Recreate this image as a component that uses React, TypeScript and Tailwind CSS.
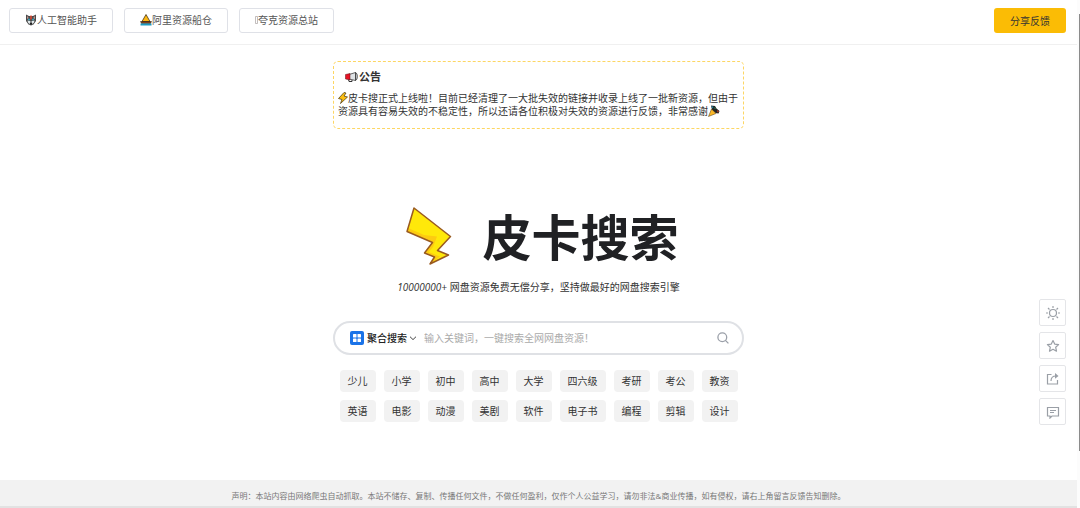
import React from "react";

type NavLink = {
  label: string;
  icon: React.ReactNode;
};

type IconProps = {
  className?: string;
};

function WolfIcon() {
  return (
    <svg viewBox="0 0 24 24" className="h-3 w-3" aria-hidden="true">
      <path d="M2 1l6 3h8l6-3v13l-5 7-5 2-5-2-5-7z" fill="#4b4b4b" />
      <path d="M4 4l3 3-2 4zM20 4l-3 3 2 4z" fill="#e8a9a0" />
      <path d="M5 13l6 1-1 7-4-4zM19 13l-6 1 1 7 4-4z" fill="#e3e9eb" />
      <path d="M6 9l4 1-1 3-3-1zM18 9l-4 1 1 3 3-1z" fill="#35a9c4" />
      <path d="M10.500 3h3v8h-3z" fill="#e2472f" />
      <path d="M9 18h6l-3 4z" fill="#1f1f1f" />
    </svg>
  );
}

function BoatIcon() {
  return (
    <svg viewBox="0 0 24 24" className="h-3 w-3" aria-hidden="true">
      <path d="M12 1l8 14H4z" fill="#fdb813" stroke="#3a2a10" strokeWidth="1.500" />
      <path d="M1 15h22l-2 4H3z" fill="#7b3f1d" stroke="#2b1a0d" />
      <path d="M1 19h22v4H1z" fill="#1c9ac0" />
    </svg>
  );
}

function TofuIcon() {
  return (
    <svg viewBox="0 0 3 8" className="h-2 w-[3px]" aria-hidden="true">
      <path d="M.5 .5h2v7h-2z" fill="none" stroke="#a9a2a0" strokeWidth=".7" />
    </svg>
  );
}

function HornIcon() {
  return (
    <svg viewBox="0 0 26 20" className="h-[10px] w-[13px]" aria-hidden="true">
      <path d="M8 5l13-4v16L8 14z" fill="#dfe3e6" stroke="#333" strokeWidth="1.500" />
      <path d="M1 5l9-2v13l-9-2z" fill="#e81224" stroke="#5c1016" />
      <path d="M7 15l1 4h6v-3" fill="none" stroke="#333" strokeWidth="2" />
      <path d="M21 1c5 2 5 14 0 16z" fill="#c4c8cb" stroke="#333" strokeWidth="1.500" />
    </svg>
  );
}

function ZapIcon() {
  return (
    <svg
      viewBox="0 0 20 24"
      className="inline-block h-3 w-[10px] align-[-2px]"
      aria-hidden="true"
    >
      <path
        d="M12 1L1 13l7 2-3 8 14-13-7-2 4-6z"
        fill="#fcbf12"
        stroke="#4a3a12"
        strokeWidth="1.500"
        strokeLinejoin="round"
      />
    </svg>
  );
}

function PartyIcon() {
  return (
    <svg
      viewBox="0 0 24 24"
      className="inline-block h-3 w-3 align-[-2px]"
      aria-hidden="true"
    >
      <path d="M6 1l8 1 3 5 6 5-2 5-6-1-7-6z" fill="#232323" />
      <path d="M7 8l9 9L1 23z" fill="#fcb827" stroke="#4a3512" />
      <path d="M7 2l4 2-2 3z" fill="#1c9ac0" />
      <path d="M18 10l4 3-3 2z" fill="#d13a30" />
      <path d="M13 4l3 3-3 1z" fill="#2f8f5b" />
    </svg>
  );
}

function BoltLogo() {
  return (
    <svg viewBox="0 0 46 58" className="h-[58px] w-[46px]" aria-hidden="true">
      <path
        d="M8 1L44.500 29.500 31.500 43.500 42.500 48 24 57 28.500 50 18.500 46 26.500 35.500 1 24.500z"
        fill="#ffe80a"
      />
      <path
        d="M1 24.500L2 21 18 28 31 29.500 27 40 22.500 45 34 49.500 24 57 28.500 50 18.500 46 26.500 35.500z"
        fill="#fdcb11"
      />
      <path
        d="M8 1L44.500 29.500 31.500 43.500 42.500 48 24 57 28.500 50 18.500 46 26.500 35.500 1 24.500z"
        fill="none"
        stroke="#995a20"
        strokeWidth="1.500"
        strokeLinejoin="round"
      />
    </svg>
  );
}

function GridIcon() {
  return (
    <svg viewBox="0 0 14 14" className="h-[14px] w-[14px]" aria-hidden="true">
      <rect width="14" height="14" rx="2" fill="#1a73e8" />
      <g fill="#fff">
        <rect x="3" y="3" width="3.500" height="3.500" rx=".6" />
        <rect x="7.500" y="3" width="3.500" height="3.500" rx=".6" />
        <rect x="3" y="7.500" width="3.500" height="3.500" rx=".6" />
        <rect x="7.500" y="7.500" width="3.500" height="3.500" rx=".6" />
      </g>
    </svg>
  );
}

function ChevronIcon({ className }: IconProps) {
  return (
    <svg viewBox="0 0 8 8" className={className} aria-hidden="true">
      <path d="M1 2.700l3 2.900 3-2.900" fill="none" stroke="#444" />
    </svg>
  );
}

function SearchIcon() {
  return (
    <svg
      viewBox="0 0 12 12"
      className="h-3 w-3"
      fill="none"
      stroke="#9a9fa8"
      strokeWidth="1.300"
      aria-hidden="true"
    >
      <circle cx="5.300" cy="5.300" r="4.400" />
      <path d="M8.400 8.400l3 3" />
    </svg>
  );
}

function ToolIcon({ children }: { children: React.ReactNode }) {
  return (
    <svg
      viewBox="0 0 14 14"
      className="h-[14px] w-[14px]"
      fill="none"
      stroke="#9a9fa6"
      strokeWidth="1.200"
      aria-hidden="true"
    >
      {children}
    </svg>
  );
}

const navLinks: NavLink[] = [
  { label: "人工智能助手", icon: <WolfIcon /> },
  { label: "阿里资源船仓", icon: <BoatIcon /> },
  { label: "夸克资源总站", icon: <TofuIcon /> },
];

const tagRows = [
  ["少儿", "小学", "初中", "高中", "大学", "四六级", "考研", "考公", "教资"],
  ["英语", "电影", "动漫", "美剧", "软件", "电子书", "编程", "剪辑", "设计"],
];

const tools = [
  {
    label: "切换主题",
    icon: (
      <ToolIcon>
        <circle cx="7" cy="7" r="3.500" />
        <path d="M7 0v2M7 12v2M0 7h2M12 7h2M2 2l1.500 1.500M10.500 10.500L12 12M12 2l-1.500 1.500M3.500 10.500L2 12" />
      </ToolIcon>
    ),
  },
  {
    label: "收藏",
    icon: (
      <ToolIcon>
        <path
          d="M7 1.500l1.700 3.600 3.900.5-2.900 2.700.8 3.900L7 10.300l-3.500 1.900.8-3.900L1.400 5.600l3.900-.5z"
          strokeLinejoin="round"
        />
      </ToolIcon>
    ),
  },
  {
    label: "分享",
    icon: (
      <ToolIcon>
        <path d="M5.500 2.500h-4v9.500h10V8" />
        <path d="M5 9C5 5.500 7 4 10 4" />
        <path d="M9 1l3.500 3L9 6.800z" fill="#9a9fa6" stroke="none" />
      </ToolIcon>
    ),
  },
  {
    label: "留言",
    icon: (
      <ToolIcon>
        <path d="M1.500 2.500h11v8.500H6l-2 2v-2H1.500z" />
        <path d="M4 5.500h6M4 7.500h4" />
      </ToolIcon>
    ),
  },
];

function Header() {
  return (
    <header className="flex h-[45px] items-start justify-between border-b border-[#f0f0f0] pt-2 pr-[11px] pl-[9px]">
      <nav className="flex gap-[11px]">
        {navLinks.map((link) => (
          <a
            key={link.label}
            href="#"
            className="flex h-[25px] items-center rounded-[3px] border border-[#dfe1e7] px-[15px] pb-px text-[#555]"
          >
            {link.icon}
            {link.label}
          </a>
        ))}
      </nav>
      <button
        type="button"
        className="h-[25px] rounded-[3px] bg-[#fbbc05] px-4 text-[#333]"
      >
        分享反馈
      </button>
    </header>
  );
}

function Notice() {
  return (
    <section className="mt-4 h-[68px] w-full rounded-[5px] border border-dashed border-[#fdd663] px-1 pt-[7px] text-[#333]">
      <h2 className="flex items-center gap-px pl-[7px] text-[11px] leading-4 font-bold">
        <HornIcon />
        公告
      </h2>
      <p className="mt-[7px] leading-[13px]">
        <ZapIcon />
        皮卡搜正式上线啦！目前已经清理了一大批失效的链接并收录上线了一批新资源，但由于资源具有容易失效的不稳定性，所以还请各位积极对失效的资源进行反馈，非常感谢
        <PartyIcon />
      </p>
    </section>
  );
}

function SearchBox() {
  return (
    <form
      className="mt-[26px] flex h-[34px] w-full items-center rounded-full border-2 border-[#dfe1e5] pr-[13px] pl-[15px]"
      onSubmit={(e) => e.preventDefault()}
    >
      <button
        type="button"
        className="flex shrink-0 items-center font-medium text-[#222]"
      >
        <GridIcon />
        <span className="ml-[3px]">聚合搜索</span>
        <ChevronIcon className="ml-[2px] h-2 w-2" />
      </button>
      <input
        type="text"
        aria-label="搜索关键词"
        placeholder="输入关键词，一键搜索全网网盘资源！"
        className="ml-[7px] min-w-0 flex-1 text-[#333] outline-none placeholder:text-[#aaa]"
      />
      <button type="submit" aria-label="搜索">
        <SearchIcon />
      </button>
    </form>
  );
}

function Tags() {
  return (
    <div className="mt-[15px] flex flex-col items-center gap-2">
      {tagRows.map((row) => (
        <div key={row[0]} className="flex gap-2">
          {row.map((tag) => (
            <a
              key={tag}
              href="#"
              className="flex h-[22px] items-center rounded-[4px] bg-[#f2f2f2] px-2 text-[#333]"
            >
              {tag}
            </a>
          ))}
        </div>
      ))}
    </div>
  );
}

function SideTools() {
  return (
    <aside className="fixed right-[14px] bottom-[83px] flex flex-col gap-[6px]">
      {tools.map((tool) => (
        <button
          key={tool.label}
          type="button"
          aria-label={tool.label}
          className="flex h-[27px] w-[27px] items-center justify-center rounded-[2px] border border-[#e4e5e8] bg-white"
        >
          {tool.icon}
        </button>
      ))}
    </aside>
  );
}

function ScrollTrack() {
  return (
    <div className="flex w-[3px] shrink-0 flex-col items-end bg-[#fcfcfc] pt-[14px]">
      <div className="h-[437px] w-px bg-[#8b8b8b]" />
    </div>
  );
}

export default function App() {
  return (
    <div className="flex min-h-screen bg-white font-['Open_Sans','Noto_Sans_CJK_SC',sans-serif] text-[10px] leading-4">
      <div className="flex min-w-0 flex-1 flex-col">
        <Header />
        <main className="mx-auto flex w-full max-w-[411px] flex-1 flex-col items-center">
          <Notice />
          <div className="mt-[74px] flex items-start gap-[30px] pt-1 pl-2">
            <BoltLogo />
            <h1 className="text-[49px] leading-[60px] font-bold text-[#202124]">
              皮卡搜索
            </h1>
          </div>
          <p className="mt-3 text-[#333]">
            <em>10000000+</em> 网盘资源免费无偿分享，坚持做最好的网盘搜索引擎
          </p>
          <SearchBox />
          <Tags />
        </main>
        <footer className="h-7 border-b-2 border-[#e2e2e2] bg-[#f2f2f2] pt-2 text-center text-[8px] text-[#777]">
          声明：本站内容由网络爬虫自动抓取。本站不储存、复制、传播任何文件，不做任何盈利，仅作个人公益学习，请勿非法&amp;商业传播，如有侵权，请右上角留言反馈告知删除。
        </footer>
      </div>
      <ScrollTrack />
      <SideTools />
    </div>
  );
}
